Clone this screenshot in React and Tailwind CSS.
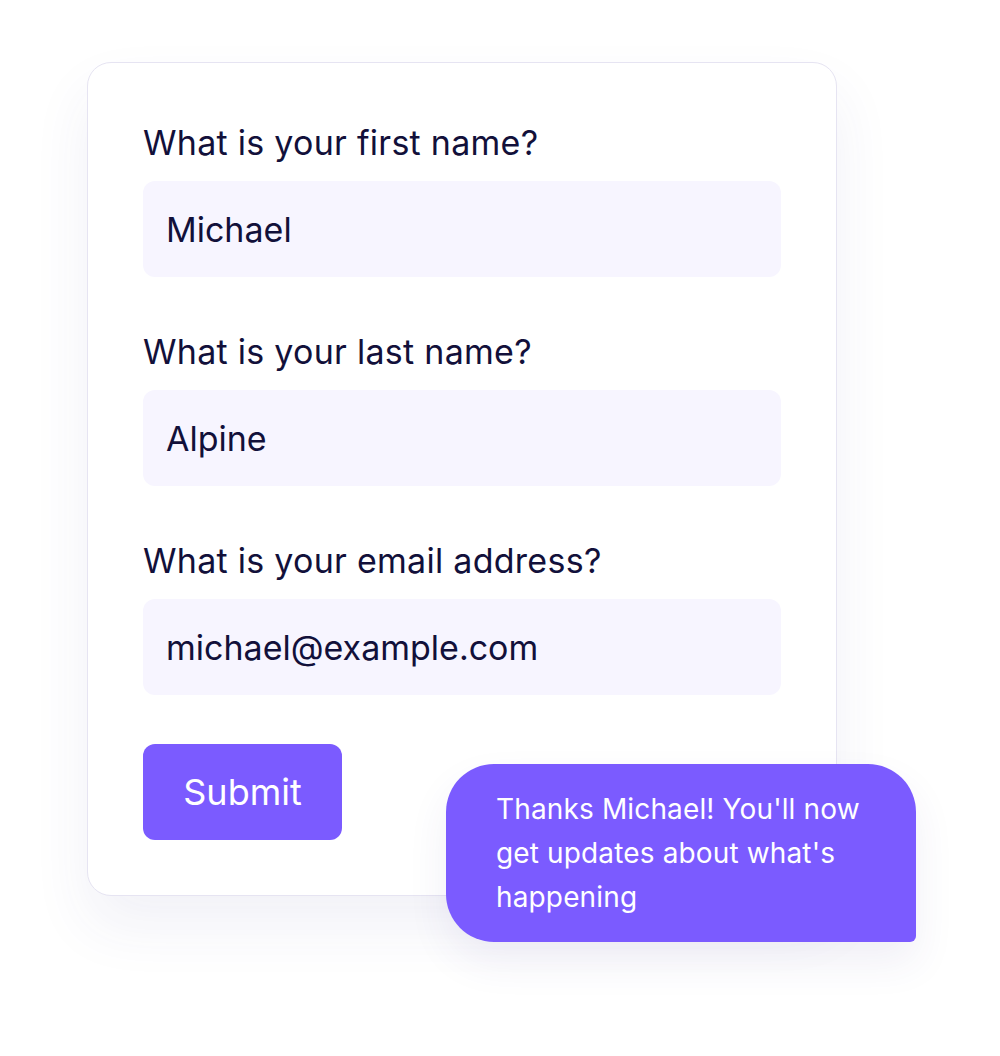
import React from 'react';

const fields = [
  { label: 'What is your first name?', value: 'Michael' },
  { label: 'What is your last name?', value: 'Alpine' },
  { label: 'What is your email address?', value: 'michael@example.com' },
];

export default function App() {
  return (
    <div className="min-h-[1056px] w-[1000px] bg-white pt-[62px] pl-[87px] font-['Inter',sans-serif] text-[#12103a]">
      <div className="relative w-[750px] rounded-[24px] border border-[#e6e4f2] bg-white px-[55px] pt-[60px] pb-[55px] shadow-[0_30px_60px_rgba(60,50,140,0.07)]">
        <div className="flex flex-col gap-[55px]">
          {fields.map((f) => (
            <div key={f.label} className="flex flex-col gap-[18px]">
              <label className="text-[34px] leading-[40px] tracking-[0.008em]">{f.label}</label>
              <div className="flex h-[96px] w-[638px] items-center rounded-[12px] bg-[#f7f5ff] px-[23px] text-[34px]">
                {f.value}
              </div>
            </div>
          ))}
        </div>
        <button className="mt-[49px] h-[96px] w-[199px] rounded-[12px] bg-[#7b5bff] text-[36px] text-white">
          Submit
        </button>

        <div className="absolute left-[358px] top-[701px] h-[178px] w-[470px] rounded-[48px] rounded-br-[6px] bg-[#7b5bff] px-[50px] pt-[23px] text-[28px] leading-[44px] tracking-[0.005em] text-white shadow-[0_20px_40px_rgba(60,50,140,0.08)]">
          Thanks Michael! You'll now get updates about what's happening
        </div>
      </div>
    </div>
  );
}
